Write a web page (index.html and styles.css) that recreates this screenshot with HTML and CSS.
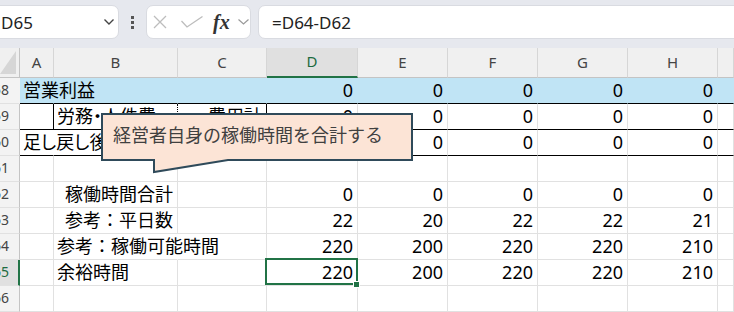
FILE: index.html
```html
<!DOCTYPE html>
<html lang="ja">
<head>
    <meta charset="UTF-8">
    <title>稼働時間シート</title>
    <link rel="stylesheet" href="styles.css">
</head>
<body>
    <div class="toolbar">
        <div class="namebox">
            <span>D65</span>
            <svg width="10" height="6" viewBox="0 0 10 6"><polyline points="0.5 0.5 5 5 9.5 0.5" fill="none" stroke="#444" stroke-width="1.4"/></svg>
        </div>
        <div class="kebab"><i></i><i></i><i></i></div>
        <div class="fnbox">
            <svg class="ico-x" width="14" height="14" viewBox="0 0 14 14"><path d="M1 1L13 13M13 1L1 13" stroke="#bdbdbd" stroke-width="1.3"/></svg>
            <svg class="ico-ok" width="22" height="12" viewBox="0 0 22 12"><polyline points="0.5 5 6 11 21.5 0.5" fill="none" stroke="#bdbdbd" stroke-width="1.3"/></svg>
            <span class="fx">fx</span>
            <svg width="11" height="6" viewBox="0 0 11 6"><polyline points="0.5 0.5 5.5 5 10.5 0.5" fill="none" stroke="#9a9a9a" stroke-width="1.2"/></svg>
        </div>
        <div class="formula">=D64-D62</div>
    </div>

    <div class="sheet">
        <div class="row head">
            <div class="cell corner">
                <svg width="19" height="29" viewBox="0 0 19 29"><polygon points="16 3 16 26 0 26" fill="#d6d6d6"/></svg>
            </div>
            <div class="cell">A</div>
            <div class="cell">B</div>
            <div class="cell">C</div>
            <div class="cell sel">D</div>
            <div class="cell">E</div>
            <div class="cell">F</div>
            <div class="cell">G</div>
            <div class="cell">H</div>
            <div class="cell"></div>
        </div>

        <div class="row blue ruled">
            <div class="cell rh"><span>58</span></div>
            <div class="cell">営業利益</div>
            <div class="cell"></div>
            <div class="cell"></div>
            <div class="cell num">0</div>
            <div class="cell num">0</div>
            <div class="cell num">0</div>
            <div class="cell num">0</div>
            <div class="cell num">0</div>
            <div class="cell"></div>
        </div>

        <div class="row ruled">
            <div class="cell rh"><span>59</span></div>
            <div class="cell edge"></div>
            <div class="cell dotted prop">労務・人件費</div>
            <div class="cell num edge">費用計</div>
            <div class="cell num">0</div>
            <div class="cell num">0</div>
            <div class="cell num">0</div>
            <div class="cell num">0</div>
            <div class="cell num">0</div>
            <div class="cell"></div>
        </div>

        <div class="row ruled">
            <div class="cell rh"><span>60</span></div>
            <div class="cell open prop">足し戻し後営業利益</div>
            <div class="cell open"></div>
            <div class="cell"></div>
            <div class="cell num">0</div>
            <div class="cell num">0</div>
            <div class="cell num">0</div>
            <div class="cell num">0</div>
            <div class="cell num">0</div>
            <div class="cell"></div>
        </div>

        <div class="row">
            <div class="cell rh"><span>61</span></div>
            <div class="cell"></div>
            <div class="cell"></div>
            <div class="cell"></div>
            <div class="cell"></div>
            <div class="cell"></div>
            <div class="cell"></div>
            <div class="cell"></div>
            <div class="cell"></div>
            <div class="cell"></div>
        </div>

        <div class="row">
            <div class="cell rh"><span>62</span></div>
            <div class="cell"></div>
            <div class="cell indent">稼働時間合計</div>
            <div class="cell"></div>
            <div class="cell num">0</div>
            <div class="cell num">0</div>
            <div class="cell num">0</div>
            <div class="cell num">0</div>
            <div class="cell num">0</div>
            <div class="cell"></div>
        </div>

        <div class="row">
            <div class="cell rh"><span>63</span></div>
            <div class="cell"></div>
            <div class="cell indent">参考：平日数</div>
            <div class="cell"></div>
            <div class="cell num">22</div>
            <div class="cell num">20</div>
            <div class="cell num">22</div>
            <div class="cell num">22</div>
            <div class="cell num">21</div>
            <div class="cell"></div>
        </div>

        <div class="row">
            <div class="cell rh"><span>64</span></div>
            <div class="cell"></div>
            <div class="cell open">参考：稼働可能時間</div>
            <div class="cell"></div>
            <div class="cell num">220</div>
            <div class="cell num">200</div>
            <div class="cell num">220</div>
            <div class="cell num">220</div>
            <div class="cell num">210</div>
            <div class="cell"></div>
        </div>

        <div class="row">
            <div class="cell rh sel"><span>65</span></div>
            <div class="cell"></div>
            <div class="cell">余裕時間</div>
            <div class="cell"></div>
            <div class="cell num active">220<i class="handle"></i></div>
            <div class="cell num">200</div>
            <div class="cell num">220</div>
            <div class="cell num">220</div>
            <div class="cell num">210</div>
            <div class="cell"></div>
        </div>

        <div class="row">
            <div class="cell rh"><span>66</span></div>
            <div class="cell"></div>
            <div class="cell"></div>
            <div class="cell"></div>
            <div class="cell"></div>
            <div class="cell"></div>
            <div class="cell"></div>
            <div class="cell"></div>
            <div class="cell"></div>
            <div class="cell"></div>
        </div>
    </div>

    <div class="callout">
        <svg width="313" height="62" viewBox="0 0 313 62"><path d="M1 1H311V47H127L53 59V47H1Z" fill="#fce4d6" stroke="#2f4a5a" stroke-width="2" stroke-linejoin="miter"/></svg>
        <span>経営者自身の稼働時間を合計する</span>
    </div>
</body>
</html>
```

FILE: styles.css
```css
body {
    margin: 0;
    width: 734px;
    height: 312px;
    overflow: hidden;
    position: relative;
    background: #ffffff;
    font-family: 'Noto Sans', 'Noto Sans CJK JP', sans-serif;
    color: #000000;
}

/* formula bar */
.toolbar {
    height: 48px;
    box-sizing: border-box;
    padding-top: 5px;
    background: #e6e8ee;
    display: flex;
    align-items: flex-start;
}

.namebox,
.fnbox,
.formula {
    height: 34px;
    box-sizing: border-box;
    background: #ffffff;
    border: 1px solid #d9dbe1;
    border-radius: 7px;
    display: flex;
    align-items: center;
}

.namebox {
    margin-left: -10px;
    width: 129px;
    padding: 0 4px 0 10px;
    justify-content: space-between;
    font-size: 17px;
    color: #222;
}

.kebab {
    width: 27px;
    height: 34px;
    display: flex;
    flex-direction: column;
    align-items: center;
    justify-content: center;
    gap: 2px;
}

.kebab i {
    width: 3px;
    height: 3px;
    background: #555;
}

.fnbox {
    width: 105px;
    padding-left: 6px;
}

.ico-x { margin-right: 14px; }
.ico-ok { margin-right: 10px; }

.fx {
    font-family: 'Liberation Serif', serif;
    font-style: italic;
    font-weight: bold;
    font-size: 20px;
    color: #333;
    margin-right: 8px;
}

.formula {
    margin-left: 7px;
    margin-right: -10px;
    flex: 1;
    padding-left: 13px;
    font-size: 17px;
    color: #222;
}

/* grid */
.row {
    display: grid;
    grid-template-columns: 20px 34px 124px 89px 91px 90px 90px 90px 90px 16px;
    height: 26px;
}

.cell {
    box-sizing: border-box;
    min-width: 0;
    border-right: 1px solid #e1e1e1;
    border-bottom: 1px solid #e1e1e1;
    display: flex;
    align-items: center;
    padding: 0 4px 0 3px;
    font-size: 18px;
    line-height: 1.3;
    white-space: nowrap;
}

.num { justify-content: flex-end; }
.indent { padding-left: 11px; }
.open { border-right-color: transparent; }
.prop { font-feature-settings: "palt"; }

.head { height: 30px; }

.head .cell {
    background: #f0f0f0;
    border-right-color: #d6d6d6;
    border-bottom-color: #c4c4c4;
    justify-content: center;
    padding: 0;
    font-size: 15px;
    color: #444;
}

.head .corner {
    border-right-color: #c4c4c4;
    justify-content: flex-start;
}

.head .sel {
    background: #e0e0e0;
    border-bottom: 2px solid #217346;
    color: #1d6b40;
}

.rh {
    background: #f3f3f3;
    border-right-color: #c4c4c4;
    justify-content: flex-end;
    padding: 0 10px 0 0;
    overflow: hidden;
    font-size: 14px;
    color: #444;
}

.rh.sel {
    background: #e0e0e0;
    border-right: 2px solid #217346;
    padding-right: 9px;
    color: #1d6b40;
}

.blue { background: #c0e4f5; }
.blue .cell { border-right-color: transparent; }

.ruled .cell { border-bottom-color: #000000; }
.ruled .rh { border-bottom-color: #e1e1e1; }
.ruled .edge { border-right-color: #000000; }
.ruled .dotted { border-right: 1px dotted #000000; }

.active { position: relative; }

.active::after {
    content: '';
    position: absolute;
    top: -2px;
    left: -2px;
    right: -1px;
    bottom: 0;
    border: 2px solid #217346;
}

.handle {
    position: absolute;
    right: -3px;
    bottom: -3px;
    width: 5px;
    height: 5px;
    background: #217346;
    border: 1px solid #ffffff;
    z-index: 1;
}

/* comment bubble */
.callout {
    position: absolute;
    left: 101px;
    top: 113px;
    width: 313px;
    height: 62px;
}

.callout svg {
    position: absolute;
    left: 0;
    top: 0;
}

.callout span {
    position: absolute;
    left: 12px;
    top: 12px;
    font-family: 'Noto Sans CJK JP', sans-serif;
    font-size: 18px;
    line-height: 1;
    color: #404040;
}
```
